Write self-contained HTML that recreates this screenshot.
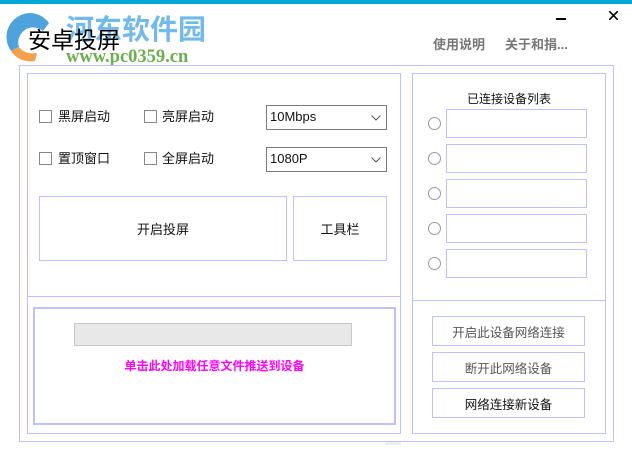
<!DOCTYPE html>
<html><head><meta charset="utf-8"><style>
*{margin:0;padding:0;box-sizing:border-box}
body{width:632px;height:474px;background:#fff;position:relative;overflow:hidden;font-family:"Liberation Sans","Noto Sans CJK SC","Microsoft YaHei",sans-serif;font-size:13px;color:#111}
.a{position:absolute}
.b{position:absolute;border:1px solid #c0c0ff}
.cb{position:absolute;width:13px;height:13px;border:1px solid #888;background:#fff}
.lbl{position:absolute;font-size:13px;line-height:16px}
.sel{position:absolute;border:1px solid #7a7a7a;background:#fff;font-size:13px;padding-left:3px;line-height:22px}
.sel svg{position:absolute;right:5px;top:9px}
.c{display:flex;align-items:center;justify-content:center}
.rad{position:absolute;width:13px;height:13px;border:1px solid #999;border-radius:50%;left:428px}
.inp{position:absolute;left:446px;width:141px;height:29px;border:1px solid #c0c0ff}
.rb{position:absolute;left:432px;width:153px;height:30px;border:1px solid #c0c0ff;color:#555;font-size:13px}
</style></head><body>
<div class="a" style="left:0;top:0;width:632px;height:4px;background:#00a8d6"></div>
<svg class="a" style="left:5px;top:11px" width="50" height="55" viewBox="0 0 50 55">
<path d="M25 2 A24 24 0 0 0 6 40 L14 36 A15 15 0 0 1 38 20 L44 12 A24 24 0 0 0 25 2Z" fill="#4fa3dc"/>
<path d="M6 40 Q14 52 30 50 L32 42 Q20 44 14 36Z" fill="#f5a04a"/>
<path d="M12 34 L27 18 L40 28 L36 28 L36 38 L18 38 L18 30Z" fill="#fff"/>
</svg>
<div class="a" style="left:66px;top:11px;font-size:28px;font-weight:bold;color:#5aaee8;opacity:.85;font-family:'Noto Sans CJK SC',sans-serif;line-height:34px">河东软件园</div>
<div class="a" style="left:28px;top:27px;font-size:23px;color:#000;line-height:26px">安卓投屏</div>
<div class="a" style="left:66px;top:48px;font-size:18.5px;font-weight:bold;color:#6ab04c;font-family:'Liberation Serif',serif;line-height:18px">www.pc0359.cn</div>
<div class="a" style="left:433px;top:34px;color:#777;font-weight:bold;font-size:13px">使用说明</div>
<div class="a" style="left:505px;top:34px;color:#777;font-weight:bold;font-size:13px">关于和捐...</div>
<div class="a" style="left:556px;top:18px;width:10px;height:2px;background:#000"></div>
<svg class="a" style="left:609px;top:11px" width="9" height="9"><path d="M0 0L9 9M9 0L0 9" stroke="#000" stroke-width="1.6"/></svg>
<div class="b" style="left:19px;top:65px;width:595px;height:377px"></div>
<div class="b" style="left:27px;top:73px;width:374px;height:361px"></div>
<div class="a" style="left:27px;top:296px;width:374px;height:1px;background:#c0c0ff"></div>
<div class="b" style="left:412px;top:73px;width:194px;height:361px"></div>
<div class="a" style="left:412px;top:300px;width:194px;height:1px;background:#c0c0ff"></div>
<div class="cb" style="left:39px;top:110px"></div><div class="lbl" style="left:58px;top:109px">黑屏启动</div>
<div class="cb" style="left:144px;top:110px"></div><div class="lbl" style="left:162px;top:109px">亮屏启动</div>
<div class="cb" style="left:39px;top:152px"></div><div class="lbl" style="left:58px;top:151px">置顶窗口</div>
<div class="cb" style="left:144px;top:152px"></div><div class="lbl" style="left:162px;top:151px">全屏启动</div>
<div class="sel" style="left:266px;top:105px;width:121px;height:25px">10Mbps<svg width="10" height="6"><path d="M0.5 0.5L5 5L9.5 0.5" stroke="#555" fill="none"/></svg></div>
<div class="sel" style="left:266px;top:147px;width:121px;height:25px">1080P<svg width="10" height="6"><path d="M0.5 0.5L5 5L9.5 0.5" stroke="#555" fill="none"/></svg></div>
<div class="b c" style="left:39px;top:196px;width:248px;height:65px">开启投屏</div>
<div class="b c" style="left:293px;top:196px;width:94px;height:65px">工具栏</div>
<div class="a" style="left:33px;top:307px;width:363px;height:118px;border:2px solid #c0c0ff"></div>
<div class="a" style="left:74px;top:323px;width:278px;height:23px;background:#e8e8e8;border:1px solid #c8c8c8"></div>
<div class="a" style="left:33px;top:357px;width:363px;text-align:center;color:#ff00ff;font-weight:bold;font-size:12px">单击此处加载任意文件推送到设备</div>
<div class="a" style="left:412px;top:90px;width:194px;text-align:center;font-size:12px">已连接设备列表</div>
<div class="rad" style="top:117px"></div><div class="inp" style="top:109px"></div>
<div class="rad" style="top:152px"></div><div class="inp" style="top:144px"></div>
<div class="rad" style="top:187px"></div><div class="inp" style="top:179px"></div>
<div class="rad" style="top:222px"></div><div class="inp" style="top:214px"></div>
<div class="rad" style="top:257px"></div><div class="inp" style="top:249px"></div>
<div class="rb c" style="top:316px;font-size:12.5px">开启此设备网络连接</div>
<div class="rb c" style="top:352px;font-size:12.5px">断开此网络设备</div>
<div class="rb c" style="top:388px;color:#111;font-size:12.5px">网络连接新设备</div>
<div class="a" style="left:385px;top:442px;width:16px;height:3px;background:#eee"></div>
</body></html>
